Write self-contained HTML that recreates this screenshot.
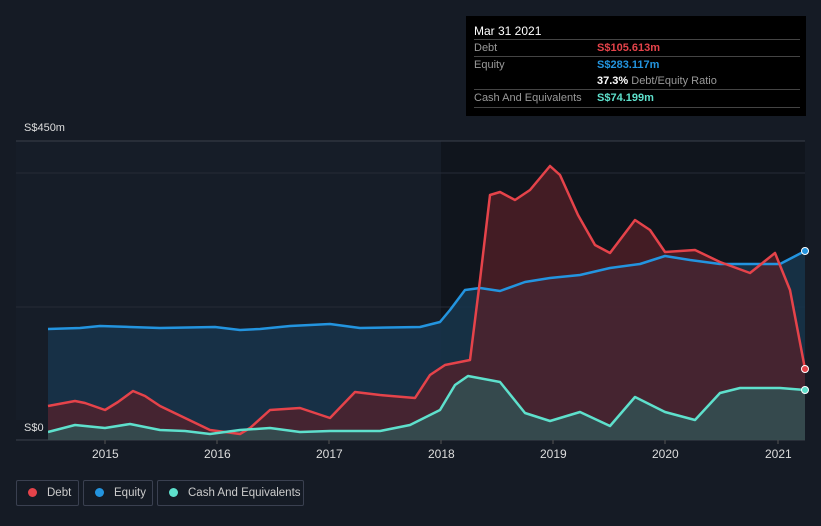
<!DOCTYPE html><html><head><style>
body{margin:0;width:821px;height:526px;background:#151b25;font-family:"Liberation Sans",sans-serif;overflow:hidden;position:relative}
.tt{position:absolute;left:466px;top:16px;width:340px;height:100px;background:#000;color:#fff;font-size:11px}
.row{position:absolute;left:8px;width:326px;border-top:1px solid #444;height:17px;line-height:17px}
.lab{color:#999;position:absolute;left:0}
.val{position:absolute;left:123px;font-weight:bold}
.leg{position:absolute;top:480px;height:26px;border:1px solid #3a4050;border-radius:2px;color:#ccc;font-size:11.5px;line-height:25px;box-sizing:border-box;white-space:nowrap;overflow:hidden}
.leg i{display:inline-block;width:9px;height:9px;border-radius:50%;margin:0 10px 0 11px;vertical-align:-1px}
.yr{position:absolute;top:447px;color:#ddd;font-size:12px}
</style></head><body>
<svg width="821" height="526" style="position:absolute;left:0;top:0">
<rect x="16" y="141" width="425" height="299" fill="#161d28"/>
<rect x="441" y="141" width="364" height="299" fill="#10151d"/>
<line x1="16" y1="141" x2="805" y2="141" stroke="#3a404a"/>
<line x1="16" y1="173" x2="805" y2="173" stroke="#262c36"/>
<line x1="16" y1="307" x2="805" y2="307" stroke="#262c36"/>
<line x1="16" y1="440" x2="805" y2="440" stroke="#3a404a"/>
<polygon fill="#173349" opacity="0.9" points="48,440 48,329 80,328 100,326 130,327 160,328 215,327 240,330 260,329 290,326 330,324 360,328 420,327 440,322 450,310 465,290 480,288 500,291 525,282 550,278 580,275 610,268 640,264 665,256 690,260 720,264 780,264 805,251 805,440"/>
<polygon fill="#5a2028" opacity="0.7" points="48,440 48,406 75,401 85,403 105,410 118,402 133,391 145,396 160,406 185,418 210,430 240,434 250,428 270,410 300,408 330,418 355,392 380,395 415,398 430,375 445,365 470,360 480,280 490,195 500,192 515,200 530,190 550,166 560,175 578,215 595,245 610,253 635,220 650,230 665,252 695,250 720,262 750,273 775,253 790,290 805,369 805,440"/>
<polygon fill="#2f5a5a" opacity="0.7" points="48,440 48,432 75,425 105,428 130,424 160,430 185,431 210,434 240,430 270,428 300,432 330,431 380,431 410,425 440,410 455,385 468,376 500,382 525,413 550,421 580,412 610,426 635,397 665,412 695,420 720,393 740,388 780,388 805,390 805,440"/>
<polyline fill="none" stroke="#2394df" stroke-width="2.5" stroke-linejoin="round" points="48,329 80,328 100,326 130,327 160,328 215,327 240,330 260,329 290,326 330,324 360,328 420,327 440,322 450,310 465,290 480,288 500,291 525,282 550,278 580,275 610,268 640,264 665,256 690,260 720,264 780,264 805,251"/>
<polyline fill="none" stroke="#e5434a" stroke-width="2.5" stroke-linejoin="round" points="48,406 75,401 85,403 105,410 118,402 133,391 145,396 160,406 185,418 210,430 240,434 250,428 270,410 300,408 330,418 355,392 380,395 415,398 430,375 445,365 470,360 480,280 490,195 500,192 515,200 530,190 550,166 560,175 578,215 595,245 610,253 635,220 650,230 665,252 695,250 720,262 750,273 775,253 790,290 805,369"/>
<polyline fill="none" stroke="#5ee0cc" stroke-width="2.5" stroke-linejoin="round" points="48,432 75,425 105,428 130,424 160,430 185,431 210,434 240,430 270,428 300,432 330,431 380,431 410,425 440,410 455,385 468,376 500,382 525,413 550,421 580,412 610,426 635,397 665,412 695,420 720,393 740,388 780,388 805,390"/>
<circle cx="805" cy="251" r="3.5" fill="#2394df" stroke="#fff"/>
<circle cx="805" cy="369" r="3.5" fill="#e5434a" stroke="#fff"/>
<circle cx="805" cy="390" r="3.5" fill="#5ee0cc" stroke="#fff"/>
<rect x="16" y="420" width="32" height="19" fill="#151b25"/>
<g stroke="#555"><line x1="105" y1="440" x2="105" y2="444"/><line x1="217" y1="440" x2="217" y2="444"/><line x1="329" y1="440" x2="329" y2="444"/><line x1="441" y1="440" x2="441" y2="444"/><line x1="553" y1="440" x2="553" y2="444"/><line x1="665" y1="440" x2="665" y2="444"/><line x1="778" y1="440" x2="778" y2="444"/></g>
</svg>
<div style="position:absolute;left:24px;top:122px;color:#ddd;font-size:11px">S$450m</div>
<div style="position:absolute;left:24px;top:422px;color:#ddd;font-size:11px">S$0</div>
<div class="yr" style="left:92px">2015</div><div class="yr" style="left:204px">2016</div><div class="yr" style="left:316px">2017</div><div class="yr" style="left:428px">2018</div><div class="yr" style="left:540px">2019</div><div class="yr" style="left:652px">2020</div><div class="yr" style="left:765px">2021</div>
<div class="tt">
<div style="position:absolute;left:8px;top:8px;font-size:12px">Mar 31 2021</div>
<div class="row" style="top:23px"><span class="lab">Debt</span><span class="val" style="color:#e5434a">S$105.613m</span></div>
<div class="row" style="top:40px"><span class="lab">Equity</span><span class="val" style="color:#2394df">S$283.117m</span></div>
<div class="row" style="top:57px;border:none"><span class="val">37.3% <span style="color:#999;font-weight:normal">Debt/Equity Ratio</span></span></div>
<div class="row" style="top:73px;border-bottom:1px solid #444"><span class="lab">Cash And Equivalents</span><span class="val" style="color:#5ee0cc">S$74.199m</span></div>
</div>
<div class="leg" style="left:16px;width:63px"><i style="background:#e5434a"></i>Debt</div>
<div class="leg" style="left:83px;width:70px"><i style="background:#2394df"></i>Equity</div>
<div class="leg" style="left:157px;width:147px"><i style="background:#5ee0cc"></i>Cash And Equivalents</div>
</body></html>
